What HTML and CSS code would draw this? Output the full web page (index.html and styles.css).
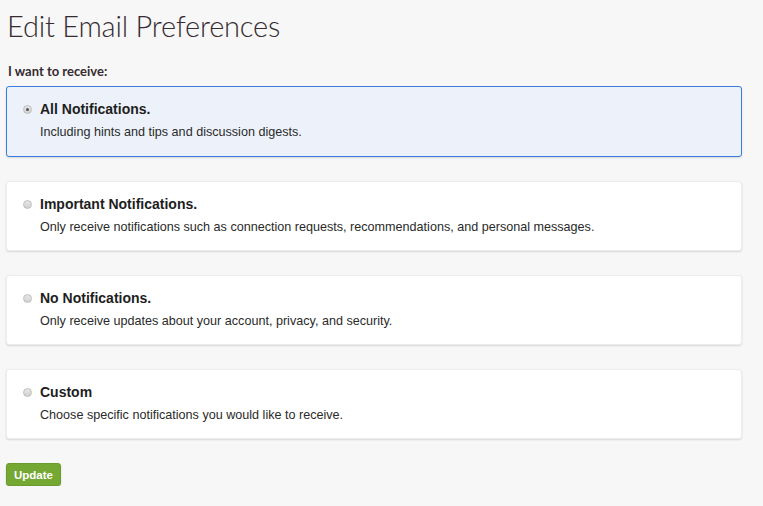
FILE: index.html
```html
<!DOCTYPE html>
<html lang="en">
<head>
<meta charset="utf-8">
<title>Edit Email Preferences</title>
<link rel="stylesheet" href="styles.css">
</head>
<body>
<main class="page">
  <h1 class="title">Edit Email Preferences</h1>
  <p class="label">I want to receive:</p>
  <div class="options">
    <label class="card selected">
      <span class="radio checked"></span>
      <span class="text">
        <span class="name">All Notifications.</span>
        <span class="desc">Including hints and tips and discussion digests.</span>
      </span>
    </label>
    <label class="card">
      <span class="radio"></span>
      <span class="text">
        <span class="name">Important Notifications.</span>
        <span class="desc">Only receive notifications such as connection requests, recommendations, and personal messages.</span>
      </span>
    </label>
    <label class="card">
      <span class="radio"></span>
      <span class="text">
        <span class="name">No Notifications.</span>
        <span class="desc">Only receive updates about your account, privacy, and security.</span>
      </span>
    </label>
    <label class="card">
      <span class="radio"></span>
      <span class="text">
        <span class="name">Custom</span>
        <span class="desc">Choose specific notifications you would like to receive.</span>
      </span>
    </label>
  </div>
  <button class="btn" type="button">Update</button>
</main>
</body>
</html>
```
FILE: styles.css
```css
html, body {
  margin: 0;
  padding: 0;
  background: #f7f7f7;
}
body {
  font-family: "Liberation Sans", Arial, sans-serif;
  color: #333;
}
.page {
  width: 736px;
  padding: 0 0 0 6px;
}
.title {
  margin: 0;
  padding: 8px 0 0 1px;
  font-family: Lato, "Liberation Sans", sans-serif;
  font-weight: 300;
  font-size: 29px;
  line-height: 36px;
  color: #352b31;
  letter-spacing: -0.2px;
}
.label {
  margin: 19px 0 0 2px;
  font-family: Lato, "Liberation Sans", sans-serif;
  font-weight: 700;
  font-size: 13px;
  line-height: 16px;
  color: #352b31;
}
.options {
  display: flex;
  flex-direction: column;
  gap: 24px;
  margin-top: 7px;
}
.card {
  display: flex;
  align-items: flex-start;
  gap: 8px;
  height: 70px;
  box-sizing: border-box;
  padding: 13px 16px 15px 16px;
  background: #fff;
  border: 1px solid #ececec;
  border-radius: 3px;
  box-shadow: 0 1px 2px rgba(0,0,0,0.13);
}
.card.selected {
  background: #edf2fa;
  border-color: #3a7be0;
  height: 71px;
}
.radio {
  flex: none;
  width: 9px;
  height: 9px;
  margin-top: 5px;
  box-sizing: border-box;
  border-radius: 50%;
  border: 1px solid #bdbdbd;
  background: linear-gradient(#e8e8e8, #d0d0d0);
  position: relative;
}
.radio.checked::after {
  content: "";
  position: absolute;
  left: 2px;
  top: 2px;
  width: 3px;
  height: 3px;
  border-radius: 50%;
  background: #555;
}
.text {
  display: flex;
  flex-direction: column;
  gap: 6px;
}
.name {
  font-size: 14px;
  line-height: 18px;
  font-weight: 700;
  color: #1e1e1e;
}
.desc {
  font-size: 12.6px;
  line-height: 16px;
  color: #2a2a2a;
}
.btn {
  display: block;
  margin-top: 24px;
  width: 55px;
  height: 23px;
  padding: 0;
  border: 1px solid #6b9b2c;
  border-radius: 3px;
  background: #75a733;
  color: #fff;
  font-family: "Liberation Sans", Arial, sans-serif;
  font-weight: 700;
  font-size: 11.5px;
  box-shadow: 0 1px 2px rgba(0,0,0,0.15);
}
```
